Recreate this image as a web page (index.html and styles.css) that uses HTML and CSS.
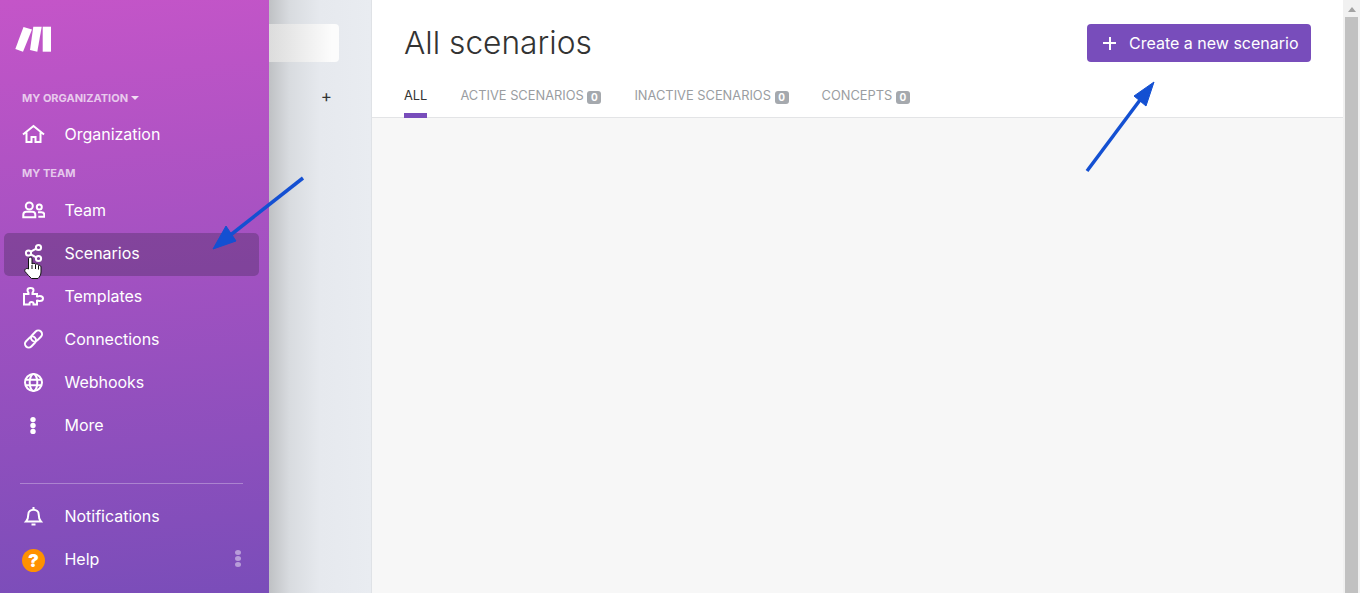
FILE: index.html
```html
<!DOCTYPE html>
<html lang="en">
<head>
    <meta charset="UTF-8">
    <meta name="viewport" content="width=device-width, initial-scale=1.0">
    <title>All scenarios</title>
    <link rel="stylesheet" href="styles.css">
</head>
<body>
    <div class="app">
        <aside class="sidebar">
            <div class="logo">
                <svg width="38" height="26" viewBox="0 0 38 26"><path fill="#fff" d="M8.500 1 17 3.500 8 25.700 .3 23z"/><path fill="#fff" d="M18.300 .7H26.700L22.300 25.700 15 24z"/><path fill="#fff" d="M27.700 .7H36V25.700H27.700z"/></svg>
            </div>
            <div class="nav-label org-label">MY ORGANIZATION <span class="caret"></span></div>
            <a class="nav-item">
                <svg class="nav-icon" viewBox="0 0 23 23"><path d="M1 12.500 11.500 4 22 12.500M4.500 10.500V20h5v-5h4v5h5V10.500"/></svg>
                <span>Organization</span>
            </a>
            <div class="nav-label team-label">MY TEAM</div>
            <a class="nav-item">
                <svg class="nav-icon" viewBox="0 0 23 23"><circle cx="7.300" cy="8" r="3.500"/><path d="M1.300 19.300v-2.500c0-2 1.200-3 3-3h6c1.800 0 3 1 3 3v2.500z"/><circle cx="17.300" cy="9" r="2.500"/><path d="M16 14.300h3.500c1.800 0 2.800 1 2.800 2.500v2h-6"/></svg>
                <span>Team</span>
            </a>
            <a class="nav-item active">
                <svg class="nav-icon" viewBox="0 0 23 23"><circle cx="6.500" cy="12" r="2.600"/><circle cx="16.500" cy="6.500" r="2.600"/><circle cx="16.500" cy="17.500" r="2.600"/><path d="M8.800 10.700l5.400-3M8.800 13.300l5.400 3"/></svg>
                <span>Scenarios</span>
            </a>
            <a class="nav-item">
                <svg class="nav-icon" viewBox="0 0 23 23"><path d="M2 10h4.500V9c0-.8-1-1.200-1-2.800C5.500 4.800 7 4 8.500 4s3 .8 3 2.200c0 1.600-1 2-1 2.800v1H15v2.500c.6.500 1.200-.5 2.700-.5 1.800 0 3.300 1 3.300 2.500S19.500 17 17.700 17c-1.500 0-2.100-1-2.700-.5V20.500h-3.500v-1c0-1-.7-1.500-2-1.500s-2 .5-2 1.500v1H2z"/></svg>
                <span>Templates</span>
            </a>
            <a class="nav-item">
                <svg class="nav-icon" viewBox="0 0 23 23"><g transform="rotate(-45 11.500 12)"><rect x="1" y="8.300" width="12.500" height="7.400" rx="3.700"/><rect x="9.500" y="8.300" width="12.500" height="7.400" rx="3.700"/></g></svg>
                <span>Connections</span>
            </a>
            <a class="nav-item">
                <svg class="nav-icon" viewBox="0 0 23 23"><circle cx="11.500" cy="12.500" r="8.500"/><ellipse cx="11.500" cy="12.500" rx="3.800" ry="8.500"/><path d="M3.500 9.800h16M3.500 15.200h16"/></svg>
                <span>Webhooks</span>
            </a>
            <a class="nav-item">
                <svg class="nav-icon" viewBox="0 0 23 23"><g class="solid"><circle cx="11" cy="6.600" r="2.700"/><circle cx="11" cy="12.500" r="2.700"/><circle cx="11" cy="18.400" r="2.700"/></g></svg>
                <span>More</span>
            </a>
            <div class="sidebar-bottom">
                <div class="divider"></div>
                <a class="nav-item">
                    <svg class="nav-icon" viewBox="0 0 23 23"><path d="M4 17.500c1.300-1.500 2.300-2.500 2.300-7 0-2.800 2.200-4.700 5.200-4.700s5.200 1.900 5.200 4.700c0 4.500 1 5.500 2.300 7z"/><path d="M11.500 3v2.500M9.500 20.500h4"/></svg>
                    <span>Notifications</span>
                </a>
                <a class="nav-item">
                    <span class="help-badge">?</span>
                    <span>Help</span>
                    <span class="help-dots"><i></i><i></i><i></i></span>
                </a>
            </div>
        </aside>

        <div class="subpanel">
            <div class="search-box"></div>
            <div class="plus-row">+</div>
        </div>

        <main class="main">
            <div class="page-head">
                <div class="title-row">
                    <h1>All scenarios</h1>
                    <button class="create-btn"><span class="create-plus"></span>Create a new scenario</button>
                </div>
                <div class="tabs">
                    <div class="tab selected">ALL</div>
                    <div class="tab">ACTIVE SCENARIOS <span class="count">0</span></div>
                    <div class="tab">INACTIVE SCENARIOS <span class="count">0</span></div>
                    <div class="tab">CONCEPTS <span class="count">0</span></div>
                </div>
            </div>
            <div class="page-body"></div>
        </main>

        <div class="scrollbar">
            <div class="scroll-up"></div>
            <div class="scroll-thumb"></div>
        </div>
    </div>

    <!-- annotations drawn over the page -->
    <svg class="overlay" width="1360" height="593" viewBox="0 0 1360 593">
        <g fill="#1450d2" stroke="#1450d2">
            <path d="M303 178 228 237" stroke-width="3.500" fill="none"/>
            <path d="M213 249 226 226 236 241z" stroke-width="1"/>
            <path d="M1087 171 1143 96" stroke-width="3.500" fill="none"/>
            <path d="M1154 82 1134 96 1146 106z" stroke-width="1"/>
        </g>
        <path class="cursor" d="M28.500 269v-10c0-2.500 3.500-2.500 3.500 0v5c1-1 3-1 3.500.5 1-.8 3-.5 3 1 1-.5 2.500 0 2.500 1.500v5c0 3-1.500 5-3 6.500h-6.500c-2-2-4-4-6.500-7-1-2 1.500-4 3.500-2.500zM32 265v4M35.500 265v4M38.500 266v3.500"/>
    </svg>
</body>
</html>
```

FILE: styles.css
```css
* {
    box-sizing: border-box;
}
body {
    font-family: Inter, "Liberation Sans", Arial, sans-serif;
    margin: 0;
    padding: 0;
    height: 593px;
    overflow: hidden;
    background-color: #fff;
}
.app {
    display: flex;
    height: 593px;
}

/* left menu */
.sidebar {
    width: 269px;
    flex: none;
    display: flex;
    flex-direction: column;
    padding: 0 10px 11px 4px;
    background: linear-gradient(175deg, #c455c8 0%, #7a4db9 100%);
    color: #fff;
}
.logo {
    height: 77px;
    padding: 26px 0 0 11px;
}
.logo svg {
    display: block;
}
.nav-label {
    font-size: 11px;
    font-weight: 700;
    line-height: 14px;
    padding-left: 18px;
    color: rgba(255, 255, 255, 0.7);
}
.org-label {
    margin-top: 14px;
    margin-bottom: 9px;
}
.team-label {
    margin-top: 9px;
    margin-bottom: 10px;
}
.caret {
    display: inline-block;
    border: 4px solid transparent;
    border-top-color: rgba(255, 255, 255, 0.8);
    border-bottom: 0;
    vertical-align: 2px;
}
.nav-item {
    display: flex;
    align-items: center;
    height: 43px;
    padding-left: 18px;
    padding-bottom: 4px;
    font-size: 16px;
    letter-spacing: -0.02px;
    border-radius: 5px;
    color: #fff;
    position: relative;
}
.nav-item.active {
    background: rgba(60, 40, 80, 0.33);
}
.nav-icon {
    width: 23px;
    height: 23px;
    margin-right: 19.5px;
    flex: none;
    fill: none;
    stroke: #fff;
    stroke-width: 2;
}
.nav-icon .solid {
    fill: #fff;
    stroke: none;
}
.sidebar-bottom {
    margin-top: auto;
}
.divider {
    height: 1px;
    margin: 0 16px 12px;
    background: rgba(255, 255, 255, 0.3);
}
.help-badge {
    width: 23px;
    height: 23px;
    margin-right: 19.5px;
    margin-top: 4px;
    border-radius: 50%;
    background: #ff9100;
    color: #fff;
    font-size: 18px;
    font-weight: 900;
    line-height: 23px;
    text-align: center;
}
.help-dots {
    margin-left: auto;
    margin-right: 18px;
    display: flex;
    flex-direction: column;
    gap: 1px;
}
.help-dots i {
    width: 6px;
    height: 5px;
    border-radius: 50%;
    background: rgba(255, 255, 255, 0.45);
}

/* panel behind the menu */
.subpanel {
    width: 103px;
    flex: none;
    border-right: 1px solid #dfe2e6;
    background: linear-gradient(90deg, #bfc1c4 0%, #d8dbdf 20%, #e6e9ee 50%, #e9ecf1 100%);
    background-color: #e9ecf1;
}
.search-box {
    width: 70px;
    height: 38px;
    margin-top: 24px;
    border-radius: 0 4px 4px 0;
    background: linear-gradient(90deg, #dcdcdc, #fcfcfc 90%);
}
.plus-row {
    margin-top: 23px;
    padding-right: 39px;
    text-align: right;
    font-size: 17px;
    line-height: 22px;
    color: #333;
}

/* main page */
.main {
    flex: 1;
    display: flex;
    flex-direction: column;
    min-width: 0;
}
.page-head {
    height: 118px;
    padding: 24px 32px 0 32px;
    border-bottom: 1px solid #e3e4e6;
    background: #fff;
}
.title-row {
    display: flex;
    justify-content: space-between;
    align-items: flex-start;
}
h1 {
    margin: 0;
    font-size: 31.7px;
    font-weight: 300;
    line-height: 38px;
    color: #333;
}
.create-btn {
    display: flex;
    align-items: center;
    width: 224px;
    height: 38px;
    padding: 0 0 0 16px;
    border: none;
    border-radius: 4px;
    background: #784dbb;
    color: #fff;
    font-family: inherit;
    font-size: 16px;
}
.create-plus {
    position: relative;
    width: 13px;
    height: 13px;
    margin-right: 13px;
    background:
        linear-gradient(#fff, #fff) center / 100% 2px no-repeat,
        linear-gradient(#fff, #fff) center / 2px 100% no-repeat;
}
.tabs {
    display: flex;
    gap: 33px;
    margin-top: 18px;
}
.tab {
    height: 38px;
    padding-top: 8px;
    font-size: 12.85px;
    line-height: 16px;
    color: #9a9da1;
}
.tab.selected {
    color: #333;
    border-bottom: 5px solid #784dbb;
}
.count {
    display: inline-block;
    min-width: 14px;
    height: 13px;
    padding: 0 3px;
    border-radius: 3px;
    background: #a5a9ae;
    color: #fff;
    font-size: 10px;
    font-weight: 700;
    line-height: 13px;
    text-align: center;
    vertical-align: -1px;
}
.page-body {
    flex: 1;
    background: #f7f7f7;
}

/* scrollbar */
.scrollbar {
    width: 17px;
    flex: none;
    background: #f1f1f1;
}
.scroll-up {
    width: 0;
    height: 0;
    margin: 7px auto 5px;
    border: 4px solid transparent;
    border-bottom: 5px solid #a3a3a3;
    border-top: 0;
}
.scroll-thumb {
    height: 576px;
    margin: 0 2px;
    background: #c1c1c1;
}

/* arrows and pointer */
.overlay {
    position: absolute;
    left: 0;
    top: 0;
    pointer-events: none;
}
.cursor {
    fill: #fff;
    stroke: #111;
    stroke-width: 1;
}
```
